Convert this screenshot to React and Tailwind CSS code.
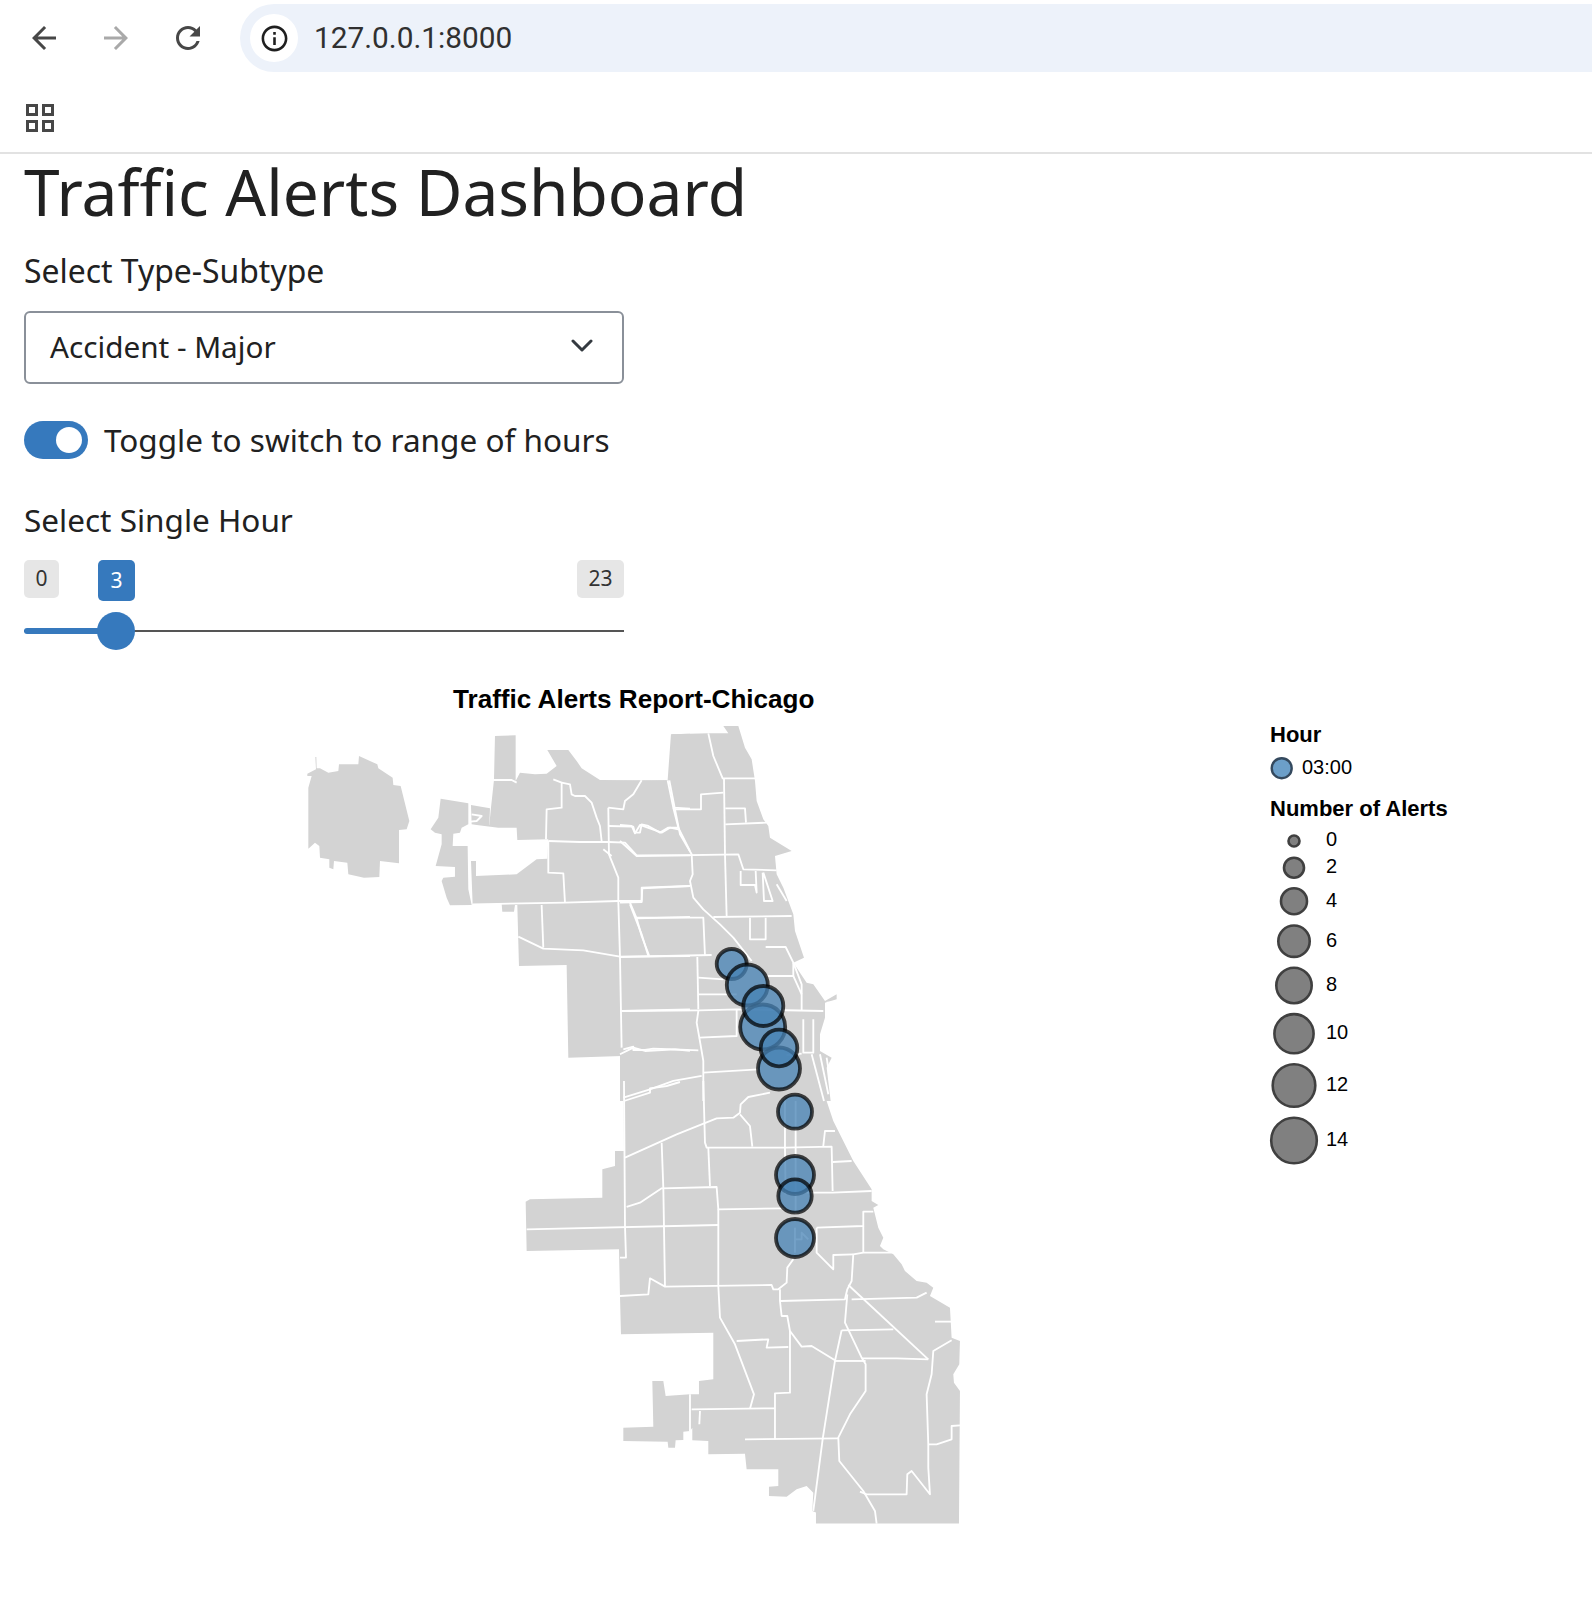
const fontNoto = { fontFamily: '"Noto Sans", "Open Sans", sans-serif' };

const blob = "55,320 65,285 52,285 52,278 78,265 76,228 79,228 80,262 90,262 115,275 145,270 147,250 205,250 207,225 262,250 265,262 308,290 310,312 332,315 358,420 350,445 327,447 327,547 270,540 268,588 222,590 175,580 172,545 132,540 130,565 118,560 118,535 90,530 88,495 75,485 55,503";
const aFills = [
  blob,
  "452,353 535,367 535,430 515,440 510,455 490,458 488,495 533,495 535,625 545,672 480,673 470,650 455,600 460,590 495,587 495,558 437,555 455,490 455,460 435,455 422,445 445,410",
  "543,372 600,382 598,432 560,432 545,430",
  "615,165 677,163 677,300 690,275 735,280 770,278 800,255 772,207 812,207 835,207 860,240 875,262 930,297 1055,298 1133,298 1143,160 1200,158 1200,1200 1000,1200 995,1125 835,1130 830,852 687,855 682,672 675,672 672,692 637,692 635,668 548,670 543,540 558,540 558,585 680,580 740,535 772,533 775,475 682,477 680,440 625,440 560,432 598,432 603,380 612,297",
];
const aLines = [
  "600,297 665,297 680,305",
  "790,295 815,305 815,380 770,385 768,475",
  "815,305 840,310 845,340 855,345 885,345 905,365 920,410 930,435 935,480",
  "955,380 957,520 985,590 985,660 990,825 995,1100",
  "955,380 1000,385 1005,360 1030,340 1055,298",
  "957,435 1030,437 1035,455 1050,455 1055,430 1075,435 1110,455 1135,440 1165,440",
  "1133,298 1150,380 1200,383",
  "1150,380 1165,440 1200,510",
  "775,480 870,483 955,483 1005,485 1040,523 1200,523",
  "940,505 965,525",
  "775,480 775,575 820,577 825,665",
  "548,670 825,665 985,660 1055,660 1057,622 1200,615",
  "1020,665 1040,712 1055,765 1078,825",
  "1040,712 1200,708",
  "755,672 760,800",
  "685,767 760,803 880,808 990,827 1200,825",
  "995,990 1200,985",
  "1000,1105 1030,1097 1030,1107 1065,1107 1090,1103 1155,1105 1200,1110",
  "545,400 575,405 560,420 540,422",
];
const bFills = [
  "155,100 265,97 325,97 310,75 355,75 375,140 395,175 405,240 410,300 430,355 445,375 450,410 515,450 465,465 470,520 490,560 520,640 525,690 552,770 520,785 560,845 580,850 615,900 650,880 650,895 615,905 615,950 600,1000 600,1050 635,1070 620,1100 632,1200 0,1200 0,240 148,238",
];
const bLines = [
  "265,97 280,165 308,232 405,232",
  "148,238 165,325 243,325 243,280 310,275",
  "312,232 315,460",
  "316,322 375,322 378,365",
  "316,370 440,365",
  "165,325 180,400 215,460 218,520 210,540 220,590 250,625 300,670 340,710 395,780",
  "0,372 35,375 45,397 60,372 125,395 150,380 175,385",
  "0,420 50,465 355,460 370,505 470,508",
  "315,460 320,645",
  "0,605 65,603 65,560 210,555",
  "30,610 65,700 85,765",
  "45,650 250,650 255,765",
  "0,768 275,762",
  "362,510 362,552 405,552 410,575 407,510",
  "428,515 432,600 458,600 430,515",
  "280,648 515,645",
  "390,650 390,715 437,715 437,650",
  "437,738 497,738 520,785 520,825 440,825",
  "232,768 235,925",
  "235,830 310,835",
  "235,880 350,880",
  "5,930 240,928 350,925 610,930",
  "235,930 230,965 238,1010 350,1005 350,925",
  "238,1010 250,1080 250,1200",
  "0,1060 40,1040 75,1050 165,1045 235,1048",
  "250,1115 415,1105",
  "10,1190 90,1165 160,1140 245,1125",
  "520,785 545,850 545,930",
  "550,955 550,1055 580,1055 580,955",
  "575,1060 612,1200",
  "600,1060 625,1180",
  "520,825 545,880",
  "620,905 660,905",
  "470,550 500,600",
  "620,1070 632,1150",
  "545,1058 500,1062",
];
const cFill = "370,0 372,210 345,210 345,255 307,265 307,350 90,355 77,362 80,510 357,505 360,645 363,760 640,755 640,895 597,900 597,940 570,940 497,945 490,900 457,900 460,1037 370,1040 370,1080 503,1082 505,1100 525,1100 527,1078 550,1077 550,1052 570,1050 577,1040 577,1078 625,1080 625,1120 735,1118 740,1165 835,1165 835,1215 807,1217 807,1245 860,1247 890,1225 920,1215 940,1235 937,1290 948,1295 948,1328 1377,1328 1380,930 1362,905 1360,880 1378,850 1380,780 1355,770 1350,680 1290,645 1300,620 1280,605 1250,600 1215,570 1205,550 1180,520 1150,505 1140,495 1150,470 1135,440 1120,380 1135,372 1115,360 1115,325 1060,240 1000,120 980,60 960,0";
const cLines = [
  "372,60 450,35 450,22 500,15 540,3",
  "610,0 615,185 620,200 855,200 995,197 998,330",
  "375,230 530,160 650,112 700,110 720,95 722,70 745,48 810,35",
  "720,100 750,135 757,197",
  "855,50 855,200 857,340",
  "887,60 887,400",
  "372,0 375,435 378,530 360,530",
  "380,378 420,365 485,322 650,318 655,385 855,382",
  "485,185 490,320 495,617",
  "80,445 655,432",
  "655,385 655,615 660,710 705,790 762,940 750,983",
  "625,200 630,315",
  "360,645 445,640 450,592 495,617 815,612 820,625 835,625 860,605 862,560 880,535",
  "840,625 840,660 845,705 862,705 870,750 905,797 935,795 1005,838",
  "840,660 1035,655 1042,625 1055,600 1060,520 1090,515 1175,515",
  "950,440 1090,435 1090,392 1120,392",
  "1090,435 1090,515",
  "950,440 950,515 1000,565 1000,522 1060,520",
  "920,335 998,335 1115,330",
  "998,243 1055,240",
  "970,195 975,150 1005,150",
  "1045,612 1285,835",
  "1055,655 1250,650 1280,635",
  "1305,722 1355,722",
  "1042,640 1035,725 1085,830 1097,850 1097,930 1050,1000 1015,1070 1018,1140 1090,1230 1125,1290 1130,1328",
  "1025,748 1180,745",
  "1025,748 1005,840 968,1075 940,1290",
  "1005,840 1097,840",
  "1085,832 1190,832 1285,835",
  "1355,778 1300,810 1295,880 1280,940 1285,1090 1285,1160 1290,1240 1235,1170 1222,1180 1220,1240 1100,1240 1080,1232",
  "1285,1090 1310,1090 1355,1075 1355,1035 1380,1033",
  "870,750 870,935 825,937 825,1075",
  "735,1075 1015,1072",
  "575,985 825,982",
  "600,990 598,1030",
  "710,780 805,775 800,800 865,798",
  "570,940 570,1050",
  "885,440 885,515",
  "885,475 905,475 905,455 925,475",
];

const alerts = [
  [731.7, 963, 15],
  [747.3, 984, 20.5],
  [762.7, 1026, 22.5],
  [763.3, 1005, 20],
  [779, 1067.5, 21],
  [779, 1047, 18.3],
  [795, 1110.7, 17],
  [795, 1174, 19],
  [795, 1195, 16.7],
  [795, 1237, 19],
];
const sizes = [
  [840, 5.5, "0", 1326, 845],
  [866.7, 10, "2", 1326, 872],
  [900.2, 13, "4", 1326, 906],
  [940.2, 15.7, "6", 1326, 946],
  [984.5, 17.7, "8", 1326, 990],
  [1032.7, 19.6, "10", 1326, 1038],
  [1084.5, 21.3, "12", 1326, 1090],
  [1139.5, 22.8, "14", 1326, 1145],
];

function Group({ tx, ty, fills, lines }) {
  return (
    <g transform={`translate(${tx} ${ty}) scale(0.3333)`}>
      {fills.map((p, i) => <polygon key={i} points={p} fill="#d3d3d3" />)}
      {lines.map((p, i) => <polyline key={i} points={p} fill="none" stroke="#ffffff" strokeWidth="5.5" strokeLinejoin="round" />)}
    </g>
  );
}

function ChromeIcon({ d, color, size, className }) {
  return (
    <svg viewBox="0 0 24 24" width={size} height={size} fill={color} className={className}><path d={d} /></svg>
  );
}

const back = "M20 11H7.83l5.59-5.59L12 4l-8 8 8 8 1.41-1.41L7.83 13H20v-2z";
const forward = "M4 11h12.17l-5.59-5.59L12 4l8 8-8 8-1.41-1.41L16.17 13H4v-2z";
const reload = "M17.65 6.35C16.2 4.9 14.21 4 12 4c-4.42 0-7.99 3.58-7.99 8s3.57 8 7.99 8c3.73 0 6.84-2.55 7.73-6h-2.08c-.82 2.33-3.04 4-5.65 4-3.31 0-6-2.69-6-6s2.69-6 6-6c1.66 0 3.14.69 4.22 1.78L13 11h7V4l-2.35 2.35z";
const info = "M11 7h2v2h-2zm0 4h2v6h-2zm1-9C6.48 2 2 6.48 2 12s4.48 10 10 10 10-4.48 10-10S17.52 2 12 2zm0 18c-4.41 0-8-3.59-8-8s3.59-8 8-8 8 3.59 8 8-3.59 8-8 8z";

export default function App() {
  return (
    <div className="w-[1592px] h-[1608px] bg-white overflow-hidden" style={fontNoto}>
      <div className="flex items-start pt-1 h-[76px]">
        <div className="flex items-center h-[68px] w-[240px] pl-[26px]">
          <ChromeIcon d={back} color="#474747" size={36} />
          <ChromeIcon d={forward} color="#a9a9a9" size={36} className="ml-[36px]" />
          <ChromeIcon d={reload} color="#474747" size={36} className="ml-[36px]" />
        </div>
        <div className="flex-1 h-[68px] bg-[#edf2fa] rounded-l-[34px] flex items-center pl-[10px]">
          <div className="w-12 h-12 rounded-full bg-white flex items-center justify-center">
            <ChromeIcon d={info} color="#1f1f1f" size={31} />
          </div>
          <span className="ml-4 text-[29.8px] text-[#303030]" style={{ fontFamily: 'Roboto, sans-serif' }}>127.0.0.1:8000</span>
        </div>
      </div>
      <div className="h-[78px] border-b-2 border-[#e2e2e2] pl-[26px] pt-[28px]">
        <svg viewBox="0 0 28 28" width="28" height="28" fill="none" stroke="#474747" strokeWidth="3">
          <rect x="1.5" y="1.5" width="9" height="9" />
          <rect x="17.5" y="1.5" width="9" height="9" />
          <rect x="1.5" y="17.5" width="9" height="9" />
          <rect x="17.5" y="17.5" width="9" height="9" />
        </svg>
      </div>
      <div className="pl-6 w-[624px] text-[#212121]">
        <h1 className="text-[64px] leading-[77px] -mt-px font-normal whitespace-nowrap">Traffic Alerts Dashboard</h1>
        <div className="text-[31.9px] leading-[44px] mt-[19px] whitespace-nowrap">Select Type-Subtype</div>
        <div className="mt-[18px] h-[73px] w-[600px] border-2 border-[#8a9099] rounded-[6px] flex items-center justify-between pl-6 pr-[29px] text-[29.7px]">
          <span>Accident - Major</span>
          <svg viewBox="0 0 22 14" width="22" height="14" fill="none" stroke="#343a40" strokeWidth="3" strokeLinecap="round" strokeLinejoin="round" className="-mt-[3px]">
            <path d="M2 2l9 9 9-9" />
          </svg>
        </div>
        <div className="mt-[37px] flex items-center h-[38px] whitespace-nowrap">
          <div className="w-16 h-[38px] rounded-full bg-[#3679bd] flex items-center justify-end pr-[6px]">
            <div className="w-[26px] h-[26px] rounded-full bg-white" />
          </div>
          <span className="ml-4 text-[31.5px]">Toggle to switch to range of hours</span>
        </div>
        <div className="text-[31.5px] leading-[44px] mt-[39px] whitespace-nowrap">Select Single Hour</div>
        <div className="relative mt-[19px] h-[92px] w-[600px]">
          <div className="absolute left-0 -top-px w-[35px] h-[38px] bg-[#e6e6e6] rounded-[5px] flex items-center justify-center text-[21px] text-[#333]">0</div>
          <div className="absolute left-[74px] -top-px w-[37px] h-[41px] bg-[#3679bd] rounded-[5px] flex items-center justify-center text-[21px] text-white">3</div>
          <div className="absolute right-0 -top-px w-[47px] h-[38px] bg-[#e6e6e6] rounded-[5px] flex items-center justify-center text-[21px] text-[#333]">23</div>
          <div className="absolute left-0 right-0 top-[69px] h-[2px] bg-[#555]" />
          <div className="absolute left-0 w-[92px] top-[67px] h-[6px] bg-[#3679bd] rounded-l-full" />
          <div className="absolute left-[73px] top-[51px] w-[38px] h-[38px] rounded-full bg-[#3679bd]" />
        </div>
      </div>
      <svg viewBox="0 670 1592 938" width="1592" height="938" className="block mt-[18px]" style={{ fontFamily: '"Liberation Sans", Arial, sans-serif' }}>
        <text x="453" y="707" fontSize="26.1" fontWeight="700" fill="#000">Traffic Alerts Report-Chicago</text>
        <Group tx={290} ty={680} fills={aFills} lines={[]} />
        <Group tx={620} ty={700} fills={bFills} lines={[]} />
        <Group tx={500} ty={1080} fills={[cFill]} lines={[]} />
        <Group tx={290} ty={680} fills={[]} lines={aLines} />
        <Group tx={620} ty={700} fills={[]} lines={bLines} />
        <Group tx={500} ty={1080} fills={[]} lines={cLines} />
        {alerts.map(([x, y, r], i) => (
          <circle key={i} cx={x} cy={y} r={r} fill="#4682b4" fillOpacity="0.75" stroke="#000" strokeOpacity="0.72" strokeWidth="3.8" />
        ))}
        <text x="1270" y="741" fontSize="22" fontWeight="700" fill="#000">Hour</text>
        <circle cx="1281.7" cy="767.2" r="10" fill="#6c9fc9" stroke="#34495e" strokeWidth="2.4" />
        <text x="1302" y="773" fontSize="20" fill="#000">03:00</text>
        <text x="1270" y="815" fontSize="22" fontWeight="700" fill="#000">Number of Alerts</text>
        {sizes.map(([cy, r, label, lx, ly]) => (
          <g key={label}>
            <circle cx="1294" cy={cy} r={r} fill="#808080" stroke="#404040" strokeWidth="2.6" />
            <text x={lx} y={ly} fontSize="20" fill="#000">{label}</text>
          </g>
        ))}
      </svg>
    </div>
  );
}
